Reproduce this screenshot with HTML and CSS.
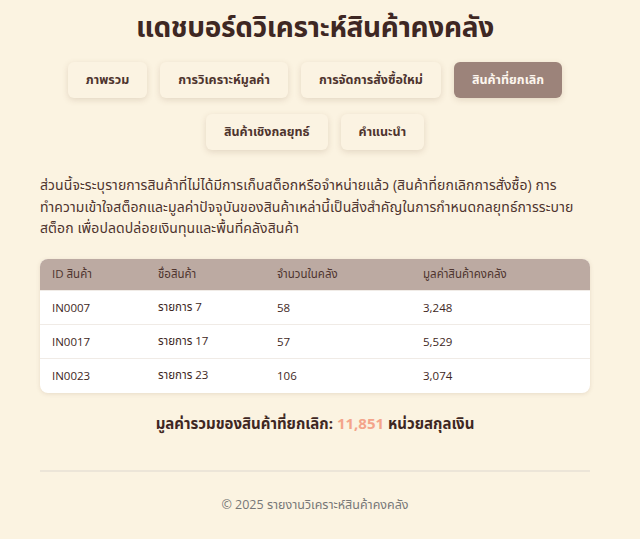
FILE: index.html
```html
<!DOCTYPE html>
<html lang="th">
<head>
<meta charset="utf-8">
<title>แดชบอร์ดวิเคราะห์สินค้าคงคลัง</title>
<link rel="stylesheet" href="styles.css">
</head>
<body>
<div class="page">
  <h1 class="title">แดชบอร์ดวิเคราะห์สินค้าคงคลัง</h1>

  <nav class="tabs">
    <button class="tab">ภาพรวม</button>
    <button class="tab">การวิเคราะห์มูลค่า</button>
    <button class="tab">การจัดการสั่งซื้อใหม่</button>
    <button class="tab tab-active">สินค้าที่ยกเลิก</button>
    <button class="tab">สินค้าเชิงกลยุทธ์</button>
    <button class="tab">คำแนะนำ</button>
  </nav>

  <section class="section">
    <p class="intro">ส่วนนี้จะระบุรายการสินค้าที่ไม่ได้มีการเก็บสต็อกหรือจำหน่ายแล้ว (สินค้าที่ยกเลิกการสั่งซื้อ) การทำความเข้าใจสต็อกและมูลค่าปัจจุบันของสินค้าเหล่านี้เป็นสิ่งสำคัญในการกำหนดกลยุทธ์การระบาย<span class="keep">สต็อก</span> เพื่อปลดปล่อยเงินทุนและพื้นที่คลังสินค้า</p>

    <div class="table-card">
      <table class="data-table">
        <thead>
          <tr>
            <th class="col-id">ID สินค้า</th>
            <th class="col-name">ชื่อสินค้า</th>
            <th class="col-qty">จำนวนในคลัง</th>
            <th class="col-value">มูลค่าสินค้าคงคลัง</th>
          </tr>
        </thead>
        <tbody>
          <tr><td>IN0007</td><td>รายการ 7</td><td>58</td><td>3,248</td></tr>
          <tr><td>IN0017</td><td>รายการ 17</td><td>57</td><td>5,529</td></tr>
          <tr><td>IN0023</td><td>รายการ 23</td><td>106</td><td>3,074</td></tr>
        </tbody>
      </table>
    </div>

    <p class="total">มูลค่ารวมของสินค้าที่ยกเลิก: <span class="total-value">11,851</span> หน่วยสกุลเงิน</p>
  </section>

  <footer class="footer">
    <p>© 2025 รายงานวิเคราะห์สินค้าคงคลัง</p>
  </footer>
</div>
</body>
</html>
```

FILE: styles.css
```css
* { box-sizing: border-box; }

html, body {
  margin: 0;
  padding: 0;
  background: #fbf3e1;
}

body {
  font-family: "Open Sans", "Noto Sans Thai", "Noto Sans Thai UI", "Noto Sans", sans-serif;
  color: #4e342e;
}

.page {
  width: 550px;
  margin-left: 40px;
}

.title {
  margin: 6px 0 0;
  text-align: center;
  font-size: 28px;
  font-weight: 700;
  line-height: 40px;
  letter-spacing: -0.3px;
  color: #3e2723;
}

.tabs {
  display: flex;
  flex-wrap: wrap;
  justify-content: center;
  gap: 16px 13px;
  margin: 16px 0 0;
}

.tab {
  font-family: inherit;
  font-size: 12.5px;
  font-weight: 700;
  color: #4e342e;
  background: #fbf3e2;
  border: none;
  border-radius: 6px;
  padding: 0 18px;
  height: 36px;
  box-shadow: 0 2px 6px rgba(120, 90, 60, 0.18);
}

.tab-active {
  background: #9c837a;
  color: #fdf6ee;
}

.section {
  margin-top: 24px;
}

.intro {
  margin: 0;
  font-size: 14px;
  line-height: 21.5px;
  letter-spacing: 0.1px;
  color: #4e342e;
}

/* keep this word from splitting across lines */
.keep {
  white-space: nowrap;
}

.table-card {
  margin-top: 20px;
  background: #fff;
  border-radius: 8px;
  overflow: hidden;
  box-shadow: 0 1px 4px rgba(120, 90, 60, 0.15);
}

.data-table {
  width: 100%;
  border-collapse: collapse;
  font-size: 11.5px;
}

.data-table th {
  background: #bcaaa2;
  color: #4e342e;
  font-weight: 400;
  text-align: left;
  height: 32px;
  padding: 0 12px;
}

.data-table td {
  height: 34px;
  padding: 0 12px;
  color: #3e2723;
  border-top: 1px solid #f0ebe6;
}

.col-id { width: 106px; }
.col-name { width: 119px; }
.col-qty { width: 146px; }

.total {
  margin: 20px 0 0;
  text-align: center;
  font-size: 15px;
  font-weight: 700;
  color: #3e2723;
}

.total-value {
  color: #f4a48a;
}

.footer {
  margin-top: 34px;
  border-top: 2px solid #ece5d8;
  text-align: center;
}

.footer p {
  margin: 24px 0 0;
  font-size: 12.5px;
  color: #777;
}
```
